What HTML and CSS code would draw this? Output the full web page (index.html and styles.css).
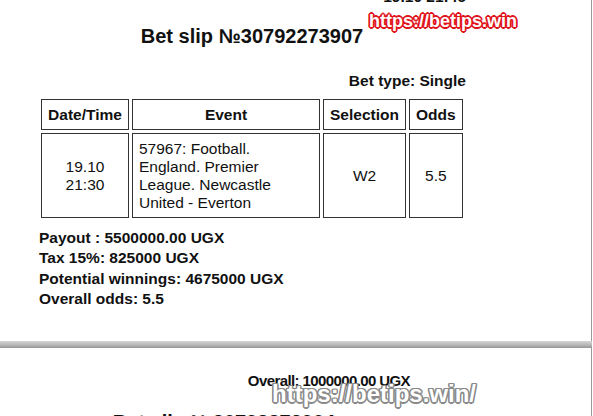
FILE: index.html
```html
<!DOCTYPE html>
<html lang="en">

<head>
    <meta charset="UTF-8">
    <meta name="viewport" content="width=device-width, initial-scale=1.0">
    <title>Bet slip №30792273907</title>
    <link rel="stylesheet" href="styles.css">
</head>

<body>
    <div class="sheet first">
        <div class="slip">
            <div class="time">19.10 21:46</div>
            <h1 class="title">Bet slip №30792273907</h1>
            <div class="type">Bet type: Single</div>
            <table class="bets">
                <tr>
                    <th class="c-date">Date/Time</th>
                    <th class="c-event">Event</th>
                    <th class="c-sel">Selection</th>
                    <th class="c-odds">Odds</th>
                </tr>
                <tr>
                    <td class="c-date">19.10<br>21:30</td>
                    <td class="c-event left">57967: Football. England. Premier League. Newcastle United - Everton</td>
                    <td class="c-sel">W2</td>
                    <td class="c-odds">5.5</td>
                </tr>
            </table>
            <div class="totals">
                <div>Payout : 5500000.00 UGX</div>
                <div>Tax 15%: 825000 UGX</div>
                <div>Potential winnings: 4675000 UGX</div>
                <div>Overall odds: 5.5</div>
            </div>
        </div>
        <!-- водяний знак -->
        <div class="mark red">https://betips.win</div>
    </div>

    <div class="gap"></div>

    <div class="sheet second">
        <div class="slip narrow">
            <div class="overall">Overall: 1000000.00 UGX</div>
            <h1 class="title">Bet slip №30792273904</h1>
        </div>
        <div class="mark grey">https://betips.win/</div>
    </div>
</body>

</html>
```

FILE: styles.css
```css
*{
    box-sizing: border-box;
}
html, body{
    margin: 0;
    height: 100%;
    overflow: hidden;
    background: #fff;
}
body{
    font-family: "Liberation Sans", Arial, sans-serif;
    color: #111;
    font-size: 15.5px;
}
.sheet{
    position: relative;
    display: flow-root;
    width: 592px;
    background: #fff;
    border-right: 1px solid #9a9a9a;
}
.sheet.first{
    height: 341px;
}
.sheet.second{
    height: 80px;
}
.gap{
    width: 592px;
    height: 7px;
    background: linear-gradient(#d6d6d6, #b4b4b4 60%, #969696);
}
.slip{
    width: 428px;
    margin-left: 38px;
}
.slip.narrow{
    width: 372px;
    padding-top: 24px;
}
.time{
    margin-top: -12px;
    text-align: right;
    font-weight: bold;
    line-height: 18px;
}
.title{
    margin: 18px 0 0;
    font-size: 20px;
    line-height: 24px;
    text-align: center;
}
.narrow .title{
    margin-top: 20px;
}
.type{
    margin-top: 24px;
    text-align: right;
    font-weight: bold;
    line-height: 18px;
}
.bets{
    margin-top: 6px;
    border-spacing: 3px;
    table-layout: fixed;
}
.bets th, .bets td{
    border: 1px solid #333;
    padding: 5.5px 6px;
    line-height: 18px;
    text-align: center;
    vertical-align: middle;
    font-size: 15.5px;
}
.bets td.left{
    text-align: left;
}
.c-date{ width: 88px; }
.c-event{ width: 188px; }
.c-sel{ width: 83px; }
.c-odds{ width: 53px; }
.totals{
    margin-top: 7px;
    font-weight: bold;
    line-height: 20.3px;
    padding-left: 1px;
}
.overall{
    text-align: right;
    font-weight: bold;
    font-size: 15px;
    letter-spacing: -0.6px;
    line-height: 18px;
}
.mark{
    position: absolute;
    font-weight: bold;
    white-space: nowrap;
    color: #fff;
}
.mark.red{
    left: 369px;
    top: 12px;
    font-size: 18px;
    line-height: 18px;
    text-shadow: 1.7px 0 0 #e0141b, -1.7px 0 0 #e0141b, 0 1.7px 0 #e0141b, 0 -1.7px 0 #e0141b,
        1.3px 1.3px 0 #e0141b, -1.3px 1.3px 0 #e0141b, 1.3px -1.3px 0 #e0141b, -1.3px -1.3px 0 #e0141b;
}
.mark.grey{
    left: 272px;
    top: 34px;
    font-size: 24px;
    line-height: 24px;
    text-shadow: 1.5px 0 0 #8a8a8a, -1.5px 0 0 #8a8a8a, 0 1.5px 0 #8a8a8a, 0 -1.5px 0 #8a8a8a,
        1.2px 1.2px 0 #8a8a8a, -1.2px 1.2px 0 #8a8a8a, 1.2px -1.2px 0 #8a8a8a, -1.2px -1.2px 0 #8a8a8a;
}
```
